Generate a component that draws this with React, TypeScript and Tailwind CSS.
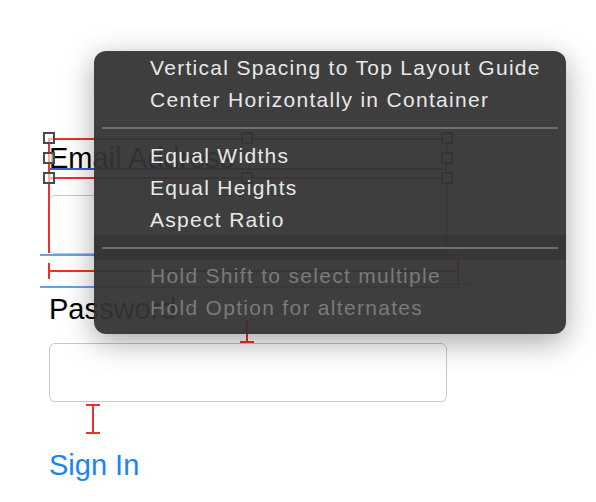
import React from 'react';

const font = { fontFamily: '"Liberation Sans", Arial, sans-serif' };

function Handle({ x, y }: { x: number; y: number }) {
  return (
    <div
      className="absolute w-[12px] h-[12px] border-2 border-[#4a4a4a] bg-white/60"
      style={{ left: x - 6, top: y - 6 }}
    />
  );
}

const items = [
  ['Vertical Spacing to Top Layout Guide', 'Center Horizontally in Container'],
  ['Equal Widths', 'Equal Heights', 'Aspect Ratio'],
];

export default function App() {
  return (
    <div className="relative w-[596px] h-[502px] bg-white overflow-hidden" style={font}>
      {/* form */}
      <div className="flex flex-col pl-[49px] pt-[141px] w-[447px]">
        <div className="text-[29px] leading-[34px] text-black">Email Address</div>
        <div className="mt-[20px] h-[59px] rounded-[6px] border border-[#c8c8c8]" />
        <div className="mt-[38px] text-[29px] leading-[34px] text-black">Password</div>
        <div className="mt-[17px] h-[59px] rounded-[6px] border border-[#c8c8c8]" />
        <div className="mt-[46px] text-[29px] leading-[34px] text-[#1a82fb]">Sign In</div>
      </div>

      {/* constraint annotations */}
      <div className="absolute left-[49px] top-[138px] w-[398px] h-[2px] bg-[#f0302a]" />
      <div className="absolute left-[49px] top-[177px] w-[398px] h-[2px] bg-[#f0302a]" />
      <div className="absolute left-[49px] top-[168px] w-[398px] h-[2px] bg-[#2d64d8]" />
      <div className="absolute left-[48px] top-[138px] w-[2px] h-[115px] bg-[#f0302a]" />
      <div className="absolute left-[446px] top-[138px] w-[1px] h-[105px] bg-[#c03030]" />
      <div className="absolute left-[40px] top-[254px] w-[420px] h-[2px] bg-[#6f9fd8]" />
      <div className="absolute left-[40px] top-[286px] w-[420px] h-[2px] bg-[#6f9fd8]" />
      <div className="absolute left-[49px] top-[270px] w-[410px] h-[2px] bg-[#f0302a]" />
      <div className="absolute left-[48px] top-[263px] w-[2px] h-[16px] bg-[#f0302a]" />
      <div className="absolute left-[457px] top-[260px] w-[2px] h-[25px] bg-[#f0302a]" />
      <div className="absolute left-[440px] top-[284px] w-[30px] h-[1px] bg-[#f0302a]" />
      <Handle x={49} y={138} />
      <Handle x={49} y={158} />
      <Handle x={49} y={178} />
      <Handle x={247} y={138} />
      <Handle x={247} y={178} />
      <Handle x={447} y={138} />
      <Handle x={447} y={158} />
      <Handle x={447} y={178} />

      {/* I-beams */}
      <div className="absolute left-[246px] top-[320px] w-[2px] h-[22px] bg-[#f0302a]" />
      <div className="absolute left-[240px] top-[341px] w-[14px] h-[2px] bg-[#f0302a]" />
      <div className="absolute left-[92px] top-[405px] w-[2px] h-[28px] bg-[#f0302a]" />
      <div className="absolute left-[86px] top-[404px] w-[14px] h-[2px] bg-[#f0302a]" />
      <div className="absolute left-[86px] top-[432px] w-[14px] h-[2px] bg-[#f0302a]" />

      {/* context menu */}
      <div className="absolute left-[94px] top-[51px] w-[472px] h-[283px] rounded-[12px] bg-[rgba(52,52,52,0.95)] shadow-[0_8px_30px_rgba(0,0,0,0.35)] overflow-hidden">
        <div className="absolute left-0 right-0 top-[184px] h-[25px] bg-black/10" />
        <div className="relative flex flex-col pt-[1px]">
          {items.map((group, gi) => (
            <React.Fragment key={gi}>
              <div className="flex flex-col">
                {group.map(t => (
                  <div key={t} className="pl-[56px] h-[32px] leading-[32px] text-[21px] tracking-[1.3px] text-[#e8e8e8]">{t}</div>
                ))}
              </div>
              <div className="mx-[8px] my-[11px] h-[2px] bg-[#6e6e6e]" />
            </React.Fragment>
          ))}
          <div className="flex flex-col">
            {['Hold Shift to select multiple', 'Hold Option for alternates'].map(t => (
              <div key={t} className="pl-[56px] h-[32px] leading-[32px] text-[21px] tracking-[1.3px] text-[#7a7a7a]">{t}</div>
            ))}
          </div>
        </div>
      </div>
    </div>
  );
}
